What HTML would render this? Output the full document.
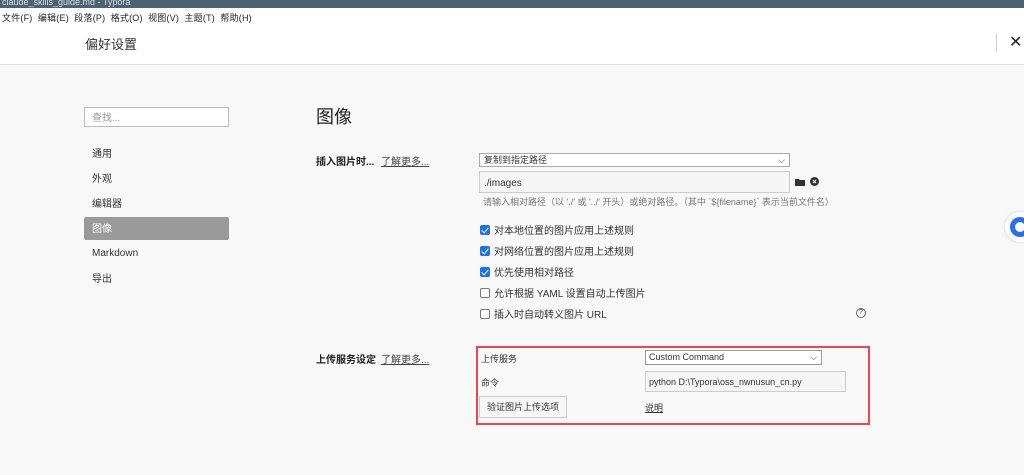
<!DOCTYPE html>
<html><head><meta charset="utf-8"><style>
*{margin:0;padding:0;box-sizing:border-box}
body{width:1024px;height:475px;overflow:hidden;background:#f8f8f8;font-family:"Liberation Sans","Noto Sans CJK SC",sans-serif;color:#333;position:relative;font-size:10px}
.a{position:absolute;white-space:nowrap;line-height:16px}
.cb{position:absolute;width:10px;height:10px;border-radius:2px}
.on{background:#1a73e8}
.on:after{content:"";position:absolute;left:3px;top:1px;width:3px;height:6px;border:solid #fff;border-width:0 1.5px 1.5px 0;transform:rotate(40deg)}
.off{border:1px solid #777;background:#fff}
</style></head><body>
<div class="a" style="left:0;top:0;width:1024px;height:8px;background:#4b6272"></div>
<div class="a" style="left:2px;top:-6px;font-size:9px;color:#dde">claude_skills_guide.md - Typora</div>
<div class="a" style="left:0;top:8px;width:1024px;height:57px;background:#fff;border-bottom:1px solid #ddd"></div>
<div class="a" style="left:2px;top:10px;font-size:9px;color:#222;letter-spacing:0.2px">文件(F)&nbsp;&nbsp;编辑(E)&nbsp;&nbsp;段落(P)&nbsp;&nbsp;格式(O)&nbsp;&nbsp;视图(V)&nbsp;&nbsp;主题(T)&nbsp;&nbsp;帮助(H)</div>
<div class="a" style="left:85px;top:37px;font-size:13px;line-height:16px;color:#333">偏好设置</div>
<div class="a" style="left:996px;top:34px;width:1px;height:18px;background:#ccc"></div>
<div class="a" style="left:1009px;top:35px;font-size:16px;line-height:16px;color:#222">✕</div>
<div class="a" style="left:84px;top:107px;width:145px;height:20px;border:1px solid #bbb;background:#fff;padding:3px 7px 0;color:#999">查找...</div>
<div class="a" style="left:92px;top:147px;">通用</div>
<div class="a" style="left:92px;top:172px;">外观</div>
<div class="a" style="left:92px;top:197px;">编辑器</div>
<div class="a" style="left:84px;top:217px;width:145px;height:23px;background:#9a9a9a;border-radius:2px;color:#fff;padding:5px 8px 0">图像</div>
<div class="a" style="left:92px;top:246px;">Markdown</div>
<div class="a" style="left:92px;top:272px;">导出</div>
<div class="a" style="left:316px;top:106px;font-size:18px;line-height:22px;color:#222">图像</div>
<div class="a" style="left:316px;top:155px;font-weight:bold;color:#222">插入图片时...</div>
<div class="a" style="left:381px;top:155px;text-decoration:underline;color:#444">了解更多...</div>
<div class="a" style="left:479px;top:153px;width:311px;height:14px;border:1px solid #aaa;background:#fff;font-size:9px;line-height:13px;padding:0 4px">复制到指定路径<span style="position:absolute;right:4px;top:0">⌵</span></div>
<div class="a" style="left:479px;top:171px;width:311px;height:22px;border:1px solid #ccc;background:#f5f5f5;padding:4px 4px 0;font-size:10px">./images</div>
<svg class="a" style="left:795px;top:178px" width="10" height="8"><path d="M0 1h4l1 1h5v6H0z" fill="#333"/></svg>
<svg class="a" style="left:810px;top:177px" width="9" height="9"><circle cx="4.5" cy="4.5" r="4.5" fill="#333"/><path d="M3 3l3 3M6 3l-3 3" stroke="#fff" stroke-width="1.2"/></svg>
<div class="a" style="left:483px;top:194px;font-size:9px;color:#777">请输入相对路径（以 './' 或 '../' 开头）或绝对路径。（其中 `${filename}` 表示当前文件名）</div>
<div class="cb on" style="left:480px;top:225px"></div><div class="a" style="left:494px;top:224px">对本地位置的图片应用上述规则</div>
<div class="cb on" style="left:480px;top:246px"></div><div class="a" style="left:494px;top:245px">对网络位置的图片应用上述规则</div>
<div class="cb on" style="left:480px;top:267px"></div><div class="a" style="left:494px;top:266px">优先使用相对路径</div>
<div class="cb off" style="left:480px;top:288px"></div><div class="a" style="left:494px;top:287px">允许根据 YAML 设置自动上传图片</div>
<div class="cb off" style="left:480px;top:309px"></div><div class="a" style="left:494px;top:308px">插入时自动转义图片 URL</div>
<div class="a" style="left:856px;top:308px;width:10px;height:10px;border:1px solid #666;border-radius:50%;font-size:7px;text-align:center;line-height:8px">?</div>
<div class="a" style="left:316px;top:353px;font-weight:bold;color:#222">上传服务设定</div>
<div class="a" style="left:381px;top:353px;text-decoration:underline;color:#444">了解更多...</div>
<div class="a" style="left:476px;top:346px;width:394px;height:79px;border:2px solid #f0454a"></div>
<div class="a" style="left:481px;top:351px;font-size:9px">上传服务</div>
<div class="a" style="left:645px;top:350px;width:177px;height:15px;border:1px solid #999;background:#fff;font-size:9px;line-height:13px;padding:0 3px">Custom Command<span style="position:absolute;right:4px;top:0">⌵</span></div>
<div class="a" style="left:481px;top:375px;font-size:9px">命令</div>
<div class="a" style="left:645px;top:371px;width:201px;height:21px;border:1px solid #ccc;background:#f5f5f5;font-size:9px;padding:2px 3px">python D:\Typora\oss_nwnusun_cn.py</div>
<div class="a" style="left:479px;top:396px;width:88px;height:22px;border:1px solid #ccc;background:#f6f6f6;font-size:9px;text-align:center;line-height:20px">验证图片上传选项</div>
<div class="a" style="left:645px;top:400px;font-size:9px;text-decoration:underline">说明</div>
<div class="a" style="left:1005px;top:212px;width:30px;height:30px;border-radius:50%;background:#fff;box-shadow:0 0 3px #ccc"></div>
<div class="a" style="left:1010px;top:217px;width:20px;height:20px;border-radius:50%;border:5px solid #2b6cf0"></div>
</body></html>
